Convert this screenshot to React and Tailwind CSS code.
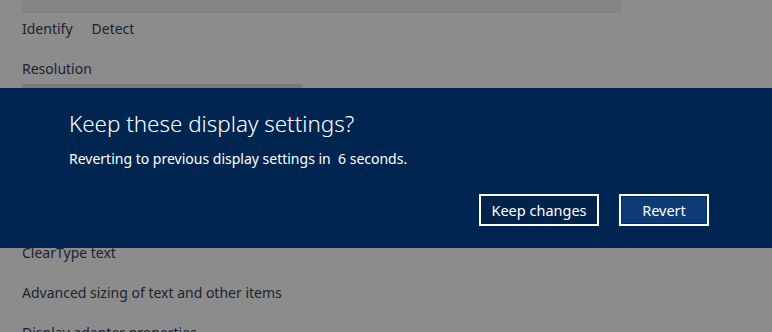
import React from 'react';

const font = { fontFamily: '"Noto Sans", "Open Sans", sans-serif' };

const App = () => {
  return (
    <div className="relative w-[772px] h-[332px] overflow-hidden bg-[#8c8c8c] text-[#1c2230]" style={font}>
      {/* page content behind the dialog */}
      <div className="pl-[22px]">
        <div className="w-[600px] h-[13px] bg-[#858585]" />
        <div className="flex gap-[19px] mt-[6px] text-[14px] leading-[20px]">
          <span>Identify</span>
          <span>Detect</span>
        </div>
        <div className="mt-[20px] text-[14px] leading-[20px]">Resolution</div>
        <div className="mt-[5px] w-[280px] h-[6px] bg-[#7a7a7a]" />
        <div className="mt-[153px] text-[14px] leading-[20px]">ClearType text</div>
        <div className="mt-[20px] text-[14px] leading-[20px]">Advanced sizing of text and other items</div>
        <div className="mt-[20px] text-[14px] leading-[20px]">Display adapter properties</div>
      </div>

      {/* confirmation dialog */}
      <div className="absolute left-0 right-0 top-[88px] h-[160px] bg-[#002550] text-white">
        <div className="pl-[69px] pt-[21px]">
          <h2 className="text-[22.4px] leading-[30px] font-light">Keep these display settings?</h2>
          <p className="mt-[10px] text-[14px] leading-[20px]">Reverting to previous display settings in&nbsp; 6 seconds.</p>
        </div>
        <div className="flex justify-end gap-[20px] pr-[63px] mt-[25px]">
          <button className="w-[120px] h-[32px] border-2 border-white bg-[#01224a] text-white text-[14.5px] leading-[20px]">
            Keep changes
          </button>
          <button className="w-[90px] h-[32px] border-2 border-white bg-[#0b3c76] text-white text-[14.5px] leading-[20px] shadow-[inset_0_0_0_1px_#062a55]">
            Revert
          </button>
        </div>
      </div>
    </div>
  );
};

export default App;
